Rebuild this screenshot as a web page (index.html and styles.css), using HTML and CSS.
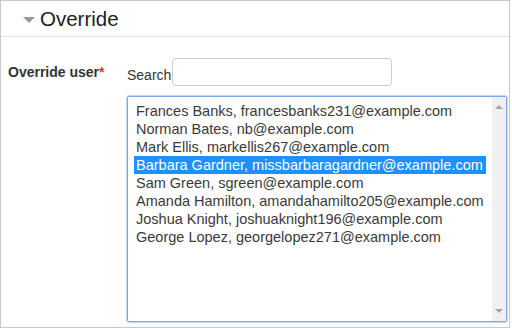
FILE: index.html
```html
<!DOCTYPE html>
<html lang="en">
<head>
    <meta charset="UTF-8">
    <meta name="viewport" content="width=device-width, initial-scale=1.0">
    <title>Override</title>
    <link rel="stylesheet" href="styles.css">
</head>
<body>
    <div class="fieldset">
        <div class="legend">
            <span class="toggle"></span>
            <span>Override</span>
        </div>
        <div class="fitem">
            <div class="flabel">Override user<span class="req">*</span></div>
            <div class="felement">
                <div class="search">
                    <span class="searchLabel">Search</span>
                    <input type="text" class="searchInput">
                </div>
                <div class="listbox">
                    <div class="options">
                        <div class="option">Frances Banks, francesbanks231@example.com</div>
                        <div class="option">Norman Bates, nb@example.com</div>
                        <div class="option">Mark Ellis, markellis267@example.com</div>
                        <div class="option selected">Barbara Gardner, missbarbaragardner@example.com</div>
                        <div class="option">Sam Green, sgreen@example.com</div>
                        <div class="option">Amanda Hamilton, amandahamilto205@example.com</div>
                        <div class="option">Joshua Knight, joshuaknight196@example.com</div>
                        <div class="option">George Lopez, georgelopez271@example.com</div>
                    </div>
                    <div class="scrollbar">
                        <span class="arrowUp"></span>
                        <span class="arrowDown"></span>
                    </div>
                </div>
            </div>
        </div>
    </div>
</body>
</html>
```

FILE: styles.css
```css
body {
    margin: 0;
    font-family: "Liberation Sans", Arial, sans-serif;
    color: #333;
    background: #fff;
}
.fieldset {
    width: 510px;
    height: 328px;
    box-sizing: border-box;
    border: 1px solid #c8c8c8;
}
.legend {
    height: 35px;
    border-bottom: 1px solid #e3e3e3;
    display: flex;
    align-items: center;
    padding-left: 22px;
    font-size: 20.5px;
    color: #222;
}
.toggle {
    width: 0;
    height: 0;
    border-left: 6px solid transparent;
    border-right: 6px solid transparent;
    border-top: 6px solid #999;
    margin-right: 5px;
    margin-top: 2px;
}
.fitem {
    display: flex;
    padding: 21px 0 0 7px;
}
.flabel {
    width: 119px;
    padding-top: 6px;
    font-size: 14px;
    line-height: 16px;
    font-weight: bold;
}
.req {
    color: #e0382f;
}
.felement {
    display: flex;
    flex-direction: column;
}
.search {
    display: flex;
    align-items: flex-end;
    font-size: 14px;
    line-height: 16px;
}
.searchLabel {
    margin-bottom: 3px;
}
.searchInput {
    width: 220px;
    height: 28px;
    box-sizing: border-box;
    border: 1px solid #ccc;
    border-radius: 4px;
    margin: 0 0 0 1px;
}
.listbox {
    margin-top: 10px;
    width: 380px;
    height: 226px;
    box-sizing: border-box;
    border: 1px solid #80a8e8;
    box-shadow: 0 0 0 1px #c6d8f4;
    border-radius: 2px;
    display: flex;
}
.options {
    flex: 1;
    padding: 5px 6px;
}
.option {
    height: 18px;
    line-height: 18px;
    padding: 0 2px;
    font-size: 14.5px;
    color: #3a3a3a;
    white-space: nowrap;
}
.selected {
    background: #1e90ff;
    color: #fff;
}
.scrollbar {
    width: 17px;
    background: #f0f0f0;
    display: flex;
    flex-direction: column;
    justify-content: space-between;
    align-items: center;
    padding: 8px 0;
}
.arrowUp {
    width: 0;
    height: 0;
    border-left: 4px solid transparent;
    border-right: 4px solid transparent;
    border-bottom: 4px solid #a3a3a3;
}
.arrowDown {
    width: 0;
    height: 0;
    border-left: 4px solid transparent;
    border-right: 4px solid transparent;
    border-top: 4px solid #a3a3a3;
}
```
